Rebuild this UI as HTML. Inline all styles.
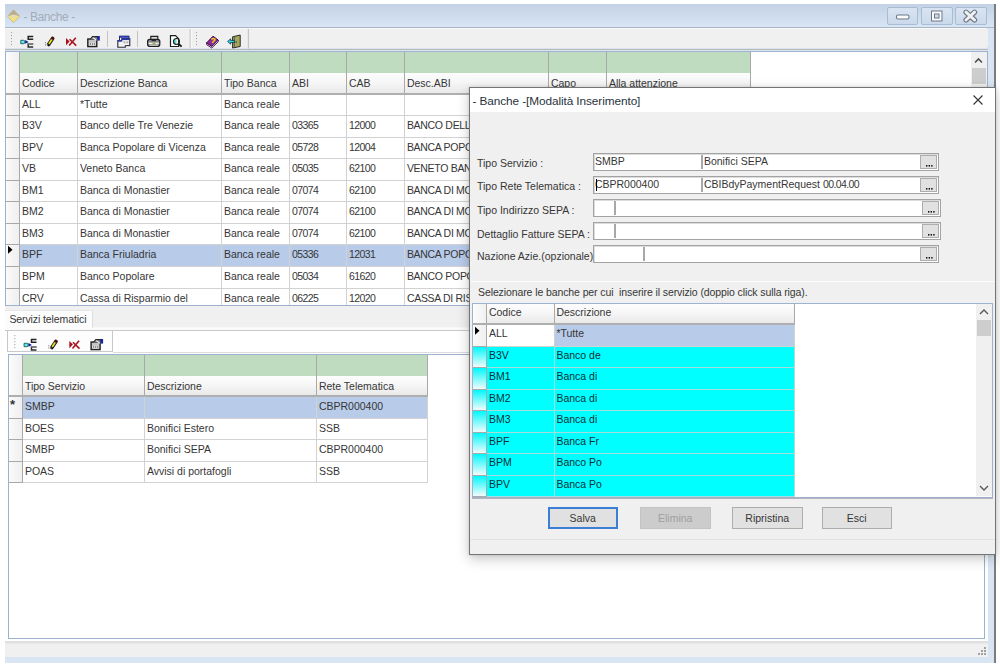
<!DOCTYPE html>
<html><head><meta charset="utf-8">
<style>
*{box-sizing:border-box;margin:0;padding:0}
html,body{width:1000px;height:667px;overflow:hidden;background:#fff;position:relative;font-family:"Liberation Sans",sans-serif;font-size:10.5px;line-height:10.5px;color:#363636}
.a{position:absolute}
.t{position:absolute;white-space:nowrap}
.n{letter-spacing:-0.55px}
</style></head><body>
<div class="a" style="left:5px;top:4px;width:991px;height:659px;background:#d9e5f3;border-right:2px solid #7c7c7c"></div>
<div class="a" style="left:5px;top:4px;width:989px;height:23px;background:linear-gradient(#c3d1e4,#d8e5f5)"></div>
<div class="a" style="left:5px;top:27px;width:989px;height:1px;background:#aab6c6"></div>
<svg class="a" style="left:7px;top:9px" width="14" height="15" viewBox="0 0 14 15">
<path d="M6.5 0.8 L12.8 7.2 L6.5 13.8 L0.5 7.2 Z" fill="#e6dcb4" stroke="#cfc08e" stroke-width="1"/>
<path d="M6.5 0.8 L12.8 7.2 L6.5 5.5 L0.5 7.2 Z" fill="#b8ad94"/>
<path d="M2.8 7.6 L6.5 11.4 L10.2 7.6" fill="none" stroke="#f4e070" stroke-width="1.8"/>
</svg>
<div class="t" style="left:23.40px;top:10.54px;font-size:12px;line-height:12px;color:#a3acb9;letter-spacing:-0.4px">- Banche -</div>
<div class="a" style="left:887px;top:7px;width:31px;height:18px;border:1px solid #a9bcd5;border-radius:2px;background:linear-gradient(#d9e4f2,#cbd9ec)"></div>
<div class="a" style="left:921px;top:7px;width:32px;height:18px;border:1px solid #a9bcd5;border-radius:2px;background:linear-gradient(#d9e4f2,#cbd9ec)"></div>
<div class="a" style="left:955px;top:7px;width:32px;height:18px;border:1px solid #a9bcd5;border-radius:2px;background:linear-gradient(#d9e4f2,#cbd9ec)"></div>
<svg class="a" style="left:887px;top:7px" width="100" height="18">
<rect x="9.5" y="8" width="12.5" height="4" rx="1.5" fill="#fbfcfd" stroke="#6e7886" stroke-width="1.1"/>
<rect x="44" y="3.5" width="11.5" height="11" fill="#6e7886"/>
<rect x="45" y="4.5" width="9.5" height="9" fill="#f8f9fb"/>
<rect x="47" y="6.5" width="5.5" height="5" fill="#6e7886"/>
<rect x="48" y="7.5" width="3.5" height="3" fill="#cfdbeb"/>
<path d="M79 5.2 L87.6 13 M87.6 5.2 L79 13" stroke="#6e7886" stroke-width="5.2" stroke-linecap="round"/>
<path d="M79 5.2 L87.6 13 M87.6 5.2 L79 13" stroke="#eef0f2" stroke-width="3" stroke-linecap="round"/>
</svg>
<div class="a" style="left:5px;top:28px;width:983px;height:20px;background:#f0f0f0;border-top:1px solid #f8f8f8;border-radius:0 3px 3px 0"></div>
<div class="a" style="left:5px;top:48.5px;width:983px;height:1px;background:#b9b7b2"></div>
<div class="a" style="left:5px;top:49.5px;width:983px;height:1.5px;background:#dde7f3"></div>
<svg class="a" style="left:0px;top:0px" width="260" height="52">
 <rect x="11" y="32" width="1" height="1.2" fill="#a4a4a4"/><rect x="11" y="35" width="1" height="1.2" fill="#a4a4a4"/><rect x="11" y="38" width="1" height="1.2" fill="#a4a4a4"/><rect x="11" y="41" width="1" height="1.2" fill="#a4a4a4"/><rect x="11" y="44" width="1" height="1.2" fill="#a4a4a4"/>
 <path d="M20.8 40.3 H23.4 Q25 40.3 25 42 Q25 43.7 23.4 43.7 H20.8 Z" fill="#6ae8e8" stroke="#1c6a6a" stroke-width="1"/>
 <path d="M25.2 40 L28.6 41.9 L25.2 43.8 Z" fill="#0c1c98"/>
 <path d="M33.2 36.6 H28.2 V39.2 H33.2" fill="none" stroke="#222" stroke-width="1.5"/>
 <path d="M33.2 44 H28.2 V46.9 H33.2" fill="none" stroke="#2a2a2a" stroke-width="1.5"/>
 <path d="M33.2 44 H28.2" fill="none" stroke="#888" stroke-width="1.5"/>
 <path d="M48.6 44.6 L52.6 38.4" stroke="#1a1a1a" stroke-width="3.6" stroke-linecap="round"/>
 <path d="M49.3 43.2 L51.8 39.6" stroke="#e8e020" stroke-width="1.8" stroke-linecap="round"/>
 <circle cx="52.6" cy="38.2" r="1.5" fill="#5a1010"/>
 <rect x="45" y="42" width="1" height="1.3" fill="#888"/><rect x="45" y="44.3" width="1" height="1.3" fill="#888"/><rect x="47" y="44.3" width="1" height="1.3" fill="#888"/>
 <path d="M66 38 L69.6 41.6 L66 45.2 Z" fill="#a8101c"/>
 <path d="M69.6 39.2 L76.2 45.6 M75.8 37.8 L69.2 45.6" stroke="#a8141e" stroke-width="1.6"/>
 <rect x="87.8" y="39" width="9" height="7.6" fill="#c4c4c4" stroke="#222" stroke-width="1.4"/>
 <rect x="89.2" y="42.8" width="6.2" height="2.6" fill="#f4f4f4"/>
 <rect x="89.8" y="43.4" width="1.2" height="1.2" fill="#444"/><rect x="91.8" y="43.4" width="1.2" height="1.2" fill="#444"/><rect x="93.8" y="43.4" width="1.2" height="1.2" fill="#444"/>
 <path d="M90 39.5 L92.5 36.6 H97.5 V39" fill="#8a8a8a" stroke="#2a2a2a" stroke-width="1.1"/>
 <path d="M92.8 37.6 L96.5 40.2" stroke="#f4f4f4" stroke-width="1.1"/>
 <rect x="97.4" y="36" width="2.4" height="4.6" fill="#1a24a8"/>

 <rect x="107" y="31" width="1" height="16" fill="#c2c2c2"/>
 <rect x="137" y="31" width="1" height="16" fill="#c2c2c2"/>
 <rect x="189.6" y="29" width="1.2" height="19.5" fill="#c6c6c6"/><rect x="190.8" y="29" width="1" height="19.5" fill="#fafafa"/>
 <rect x="119.5" y="36.3" width="9.5" height="7" fill="#eef2f8" stroke="#2a2a4a" stroke-width="1"/>
 <rect x="119.5" y="35.8" width="9.5" height="2" fill="#2838a8"/>
 <rect x="121.8" y="38.6" width="8" height="7" fill="#fafafa" stroke="#2a2a3a" stroke-width="1.1"/>
 <rect x="121.8" y="38.3" width="8" height="1.8" fill="#2838a8"/>
 <rect x="123.3" y="41.3" width="2.2" height="2.2" fill="#b0b0b0"/><rect x="126.3" y="41.3" width="2.2" height="2.2" fill="#b0b0b0"/>
 <path d="M121.8 40.6 H117.8 V47.2 H125.3 V45.6" fill="#f2f2f2" stroke="#2a2a3a" stroke-width="1.1"/>
 <rect x="117.8" y="40" width="4" height="1.6" fill="#2838a8"/>
 <path d="M150.8 39.8 V36.4 H157.8 V39.8" fill="#d4dcd4" stroke="#222" stroke-width="1.2"/>
 <rect x="147.6" y="39.4" width="12.2" height="7" rx="2.2" fill="#8c8c94" stroke="#1e1e1e" stroke-width="1.2"/>
 <rect x="151.5" y="39.8" width="4.5" height="1.4" fill="#2a2a34"/>
 <rect x="148.6" y="42.7" width="10.2" height="1.3" fill="#f2f2f2"/>
 <rect x="152.6" y="42.7" width="2.8" height="1.3" fill="#9ab030"/>
 <rect x="149.4" y="44.7" width="8.6" height="1" fill="#dadada"/>
 <path d="M170.5 35.6 H175.5 L178.6 38.8 V46.5 H170.5 Z" fill="#fff" stroke="#1e1e1e" stroke-width="1.2"/>
 <path d="M176.5 38.5 A3 3 0 0 0 176.5 44.5 Z" fill="#60e0d8"/>
 <circle cx="176.5" cy="41.5" r="3" fill="none" stroke="#1e1e1e" stroke-width="1.1"/>
 <path d="M178.6 43.8 L181.6 46.6" stroke="#111" stroke-width="1.8"/>
 <rect x="196" y="32" width="1" height="1.2" fill="#a4a4a4"/><rect x="196" y="35" width="1" height="1.2" fill="#a4a4a4"/><rect x="196" y="38" width="1" height="1.2" fill="#a4a4a4"/><rect x="196" y="41" width="1" height="1.2" fill="#a4a4a4"/><rect x="196" y="44" width="1" height="1.2" fill="#a4a4a4"/>
 <rect x="247.8" y="29" width="1.2" height="19.5" fill="#c6c6c6"/>
 <path d="M206.5 43 L213 36.2 L218.2 40 L211.8 46.4 Z" fill="#8e2a96" stroke="#3a0a48" stroke-width="1"/>
 <path d="M206.5 43 L206.8 44.8 L211.8 48 L218.2 41.8 L218.2 40 L211.8 46.4 Z" fill="#f2e6f2" stroke="#3a0a48" stroke-width="0.9"/>
 <path d="M211.4 39.4 Q213.6 37.6 215 39.2 Q215.3 40.6 213.4 41.4 L212.4 43" fill="none" stroke="#f0c820" stroke-width="1.5"/>
 <path d="M232.6 36.8 L240.2 35 V46.5 L232.6 48 Z" fill="#a8a85a" stroke="#2a2a2a" stroke-width="1"/>
 <path d="M234.4 36.6 V47.4" stroke="#555" stroke-width="0.9"/>
 <rect x="235.6" y="41.5" width="1.2" height="1.2" fill="#222"/>
 <path d="M227.6 41.5 L230.6 38.8 V40.4 H234.4 V42.6 H230.6 V44.2 Z" fill="#38d0e0" stroke="#0a3848" stroke-width="0.8"/>
</svg>
<div class="a" style="left:5px;top:51px;width:983px;height:255px;background:#fff;border:1px solid #9cb2ce"></div>
<div class="a" style="left:6px;top:52px;width:13px;height:42px;background:linear-gradient(90deg,#fcfcfc,#f0f0f0)"></div>
<div class="a" style="left:19px;top:52px;width:58px;height:21px;background:#c0dcc0"></div>
<div class="a" style="left:19px;top:73px;width:58px;height:21px;background:linear-gradient(#fdfdfd,#f6f6f6 45%,#e8e8e8)"></div>
<div class="a" style="left:77px;top:52px;width:144px;height:21px;background:#c0dcc0"></div>
<div class="a" style="left:77px;top:73px;width:144px;height:21px;background:linear-gradient(#fdfdfd,#f6f6f6 45%,#e8e8e8)"></div>
<div class="a" style="left:221px;top:52px;width:68px;height:21px;background:#c0dcc0"></div>
<div class="a" style="left:221px;top:73px;width:68px;height:21px;background:linear-gradient(#fdfdfd,#f6f6f6 45%,#e8e8e8)"></div>
<div class="a" style="left:289px;top:52px;width:57px;height:21px;background:#c0dcc0"></div>
<div class="a" style="left:289px;top:73px;width:57px;height:21px;background:linear-gradient(#fdfdfd,#f6f6f6 45%,#e8e8e8)"></div>
<div class="a" style="left:346px;top:52px;width:58px;height:21px;background:#c0dcc0"></div>
<div class="a" style="left:346px;top:73px;width:58px;height:21px;background:linear-gradient(#fdfdfd,#f6f6f6 45%,#e8e8e8)"></div>
<div class="a" style="left:404px;top:52px;width:144px;height:21px;background:#c0dcc0"></div>
<div class="a" style="left:404px;top:73px;width:144px;height:21px;background:linear-gradient(#fdfdfd,#f6f6f6 45%,#e8e8e8)"></div>
<div class="a" style="left:548px;top:52px;width:58px;height:21px;background:#c0dcc0"></div>
<div class="a" style="left:548px;top:73px;width:58px;height:21px;background:linear-gradient(#fdfdfd,#f6f6f6 45%,#e8e8e8)"></div>
<div class="a" style="left:606px;top:52px;width:144px;height:21px;background:#c0dcc0"></div>
<div class="a" style="left:606px;top:73px;width:144px;height:21px;background:linear-gradient(#fdfdfd,#f6f6f6 45%,#e8e8e8)"></div>
<div class="a" style="left:19px;top:52px;width:1px;height:42px;background:#a9a9a9"></div>
<div class="a" style="left:77px;top:52px;width:1px;height:42px;background:#a9a9a9"></div>
<div class="a" style="left:221px;top:52px;width:1px;height:42px;background:#a9a9a9"></div>
<div class="a" style="left:289px;top:52px;width:1px;height:42px;background:#a9a9a9"></div>
<div class="a" style="left:346px;top:52px;width:1px;height:42px;background:#a9a9a9"></div>
<div class="a" style="left:404px;top:52px;width:1px;height:42px;background:#a9a9a9"></div>
<div class="a" style="left:548px;top:52px;width:1px;height:42px;background:#a9a9a9"></div>
<div class="a" style="left:606px;top:52px;width:1px;height:42px;background:#a9a9a9"></div>
<div class="a" style="left:750px;top:52px;width:1px;height:42px;background:#a9a9a9"></div>
<div class="a" style="left:6px;top:93px;width:745px;height:2px;background:#afafaf"></div>
<div class="a" style="left:6px;top:95px;width:13px;height:20px;background:linear-gradient(90deg,#fafafa,#efefef)"></div>
<div class="a" style="left:20px;top:115px;width:731px;height:1px;background:#d2d2d2"></div>
<div class="a" style="left:6px;top:115px;width:13px;height:1px;background:#a9a9a9"></div>
<div class="a" style="left:6px;top:116px;width:13px;height:21px;background:linear-gradient(90deg,#fafafa,#efefef)"></div>
<div class="a" style="left:20px;top:137px;width:731px;height:1px;background:#d2d2d2"></div>
<div class="a" style="left:6px;top:137px;width:13px;height:1px;background:#a9a9a9"></div>
<div class="a" style="left:6px;top:138px;width:13px;height:20px;background:linear-gradient(90deg,#fafafa,#efefef)"></div>
<div class="a" style="left:20px;top:158px;width:731px;height:1px;background:#d2d2d2"></div>
<div class="a" style="left:6px;top:158px;width:13px;height:1px;background:#a9a9a9"></div>
<div class="a" style="left:6px;top:159px;width:13px;height:21px;background:linear-gradient(90deg,#fafafa,#efefef)"></div>
<div class="a" style="left:20px;top:180px;width:731px;height:1px;background:#d2d2d2"></div>
<div class="a" style="left:6px;top:180px;width:13px;height:1px;background:#a9a9a9"></div>
<div class="a" style="left:6px;top:181px;width:13px;height:20px;background:linear-gradient(90deg,#fafafa,#efefef)"></div>
<div class="a" style="left:20px;top:201px;width:731px;height:1px;background:#d2d2d2"></div>
<div class="a" style="left:6px;top:201px;width:13px;height:1px;background:#a9a9a9"></div>
<div class="a" style="left:6px;top:202px;width:13px;height:21px;background:linear-gradient(90deg,#fafafa,#efefef)"></div>
<div class="a" style="left:20px;top:223px;width:731px;height:1px;background:#d2d2d2"></div>
<div class="a" style="left:6px;top:223px;width:13px;height:1px;background:#a9a9a9"></div>
<div class="a" style="left:6px;top:224px;width:13px;height:20px;background:linear-gradient(90deg,#fafafa,#efefef)"></div>
<div class="a" style="left:20px;top:244px;width:731px;height:1px;background:#d2d2d2"></div>
<div class="a" style="left:6px;top:244px;width:13px;height:1px;background:#a9a9a9"></div>
<div class="a" style="left:6px;top:245px;width:13px;height:21px;background:linear-gradient(90deg,#fafafa,#efefef)"></div>
<div class="a" style="left:20px;top:245px;width:730px;height:21px;background:#b8cbe9"></div>
<div class="a" style="left:20px;top:266px;width:731px;height:1px;background:#d2d2d2"></div>
<div class="a" style="left:6px;top:266px;width:13px;height:1px;background:#a9a9a9"></div>
<div class="a" style="left:6px;top:267px;width:13px;height:21px;background:linear-gradient(90deg,#fafafa,#efefef)"></div>
<div class="a" style="left:20px;top:288px;width:731px;height:1px;background:#d2d2d2"></div>
<div class="a" style="left:6px;top:288px;width:13px;height:1px;background:#a9a9a9"></div>
<div class="a" style="left:6px;top:289px;width:13px;height:16px;background:linear-gradient(90deg,#fafafa,#efefef)"></div>
<div class="a" style="left:77px;top:95px;width:1px;height:210px;background:#d2d2d2"></div>
<div class="a" style="left:221px;top:95px;width:1px;height:210px;background:#d2d2d2"></div>
<div class="a" style="left:289px;top:95px;width:1px;height:210px;background:#d2d2d2"></div>
<div class="a" style="left:346px;top:95px;width:1px;height:210px;background:#d2d2d2"></div>
<div class="a" style="left:404px;top:95px;width:1px;height:210px;background:#d2d2d2"></div>
<div class="a" style="left:548px;top:95px;width:1px;height:210px;background:#d2d2d2"></div>
<div class="a" style="left:606px;top:95px;width:1px;height:210px;background:#d2d2d2"></div>
<div class="a" style="left:750px;top:95px;width:1px;height:210px;background:#d2d2d2"></div>
<div class="a" style="left:19px;top:95px;width:1px;height:210px;background:#a9a9a9"></div>
<div class="t" style="left:21.90px;top:77.91px">Codice</div>
<div class="t" style="left:79.90px;top:77.91px">Descrizione Banca</div>
<div class="t" style="left:223.90px;top:77.91px">Tipo Banca</div>
<div class="t" style="left:291.90px;top:77.91px">ABI</div>
<div class="t" style="left:348.90px;top:77.91px">CAB</div>
<div class="t" style="left:406.90px;top:77.91px">Desc.ABI</div>
<div class="t" style="left:550.90px;top:77.91px">Capo</div>
<div class="t" style="left:608.90px;top:77.91px">Alla attenzione</div>
<div class="t" style="left:21.90px;top:98.51px">ALL</div>
<div class="t" style="left:79.90px;top:98.51px">*Tutte</div>
<div class="t" style="left:223.90px;top:98.51px">Banca reale</div>
<div class="t" style="left:21.90px;top:119.51px">B3V</div>
<div class="t" style="left:79.90px;top:119.51px">Banco delle Tre Venezie</div>
<div class="t" style="left:223.90px;top:119.51px">Banca reale</div>
<div class="t" style="left:291.90px;top:119.51px"><span class="n">03365</span></div>
<div class="t" style="left:348.90px;top:119.51px"><span class="n">12000</span></div>
<div class="t" style="left:406.90px;top:119.51px;letter-spacing:-0.3px">BANCO DELL</div>
<div class="t" style="left:21.90px;top:141.51px">BPV</div>
<div class="t" style="left:79.90px;top:141.51px">Banca Popolare di Vicenza</div>
<div class="t" style="left:223.90px;top:141.51px">Banca reale</div>
<div class="t" style="left:291.90px;top:141.51px"><span class="n">05728</span></div>
<div class="t" style="left:348.90px;top:141.51px"><span class="n">12004</span></div>
<div class="t" style="left:406.90px;top:141.51px;letter-spacing:-0.3px">BANCA POPO</div>
<div class="t" style="left:21.90px;top:162.51px">VB</div>
<div class="t" style="left:79.90px;top:162.51px">Veneto Banca</div>
<div class="t" style="left:223.90px;top:162.51px">Banca reale</div>
<div class="t" style="left:291.90px;top:162.51px"><span class="n">05035</span></div>
<div class="t" style="left:348.90px;top:162.51px"><span class="n">62100</span></div>
<div class="t" style="left:406.90px;top:162.51px;letter-spacing:-0.3px">VENETO BAN</div>
<div class="t" style="left:21.90px;top:184.51px">BM1</div>
<div class="t" style="left:79.90px;top:184.51px">Banca di Monastier</div>
<div class="t" style="left:223.90px;top:184.51px">Banca reale</div>
<div class="t" style="left:291.90px;top:184.51px"><span class="n">07074</span></div>
<div class="t" style="left:348.90px;top:184.51px"><span class="n">62100</span></div>
<div class="t" style="left:406.90px;top:184.51px;letter-spacing:-0.3px">BANCA DI MO</div>
<div class="t" style="left:21.90px;top:205.51px">BM2</div>
<div class="t" style="left:79.90px;top:205.51px">Banca di Monastier</div>
<div class="t" style="left:223.90px;top:205.51px">Banca reale</div>
<div class="t" style="left:291.90px;top:205.51px"><span class="n">07074</span></div>
<div class="t" style="left:348.90px;top:205.51px"><span class="n">62100</span></div>
<div class="t" style="left:406.90px;top:205.51px;letter-spacing:-0.3px">BANCA DI MO</div>
<div class="t" style="left:21.90px;top:227.51px">BM3</div>
<div class="t" style="left:79.90px;top:227.51px">Banca di Monastier</div>
<div class="t" style="left:223.90px;top:227.51px">Banca reale</div>
<div class="t" style="left:291.90px;top:227.51px"><span class="n">07074</span></div>
<div class="t" style="left:348.90px;top:227.51px"><span class="n">62100</span></div>
<div class="t" style="left:406.90px;top:227.51px;letter-spacing:-0.3px">BANCA DI MO</div>
<div class="t" style="left:21.90px;top:248.51px">BPF</div>
<div class="t" style="left:79.90px;top:248.51px">Banca Friuladria</div>
<div class="t" style="left:223.90px;top:248.51px">Banca reale</div>
<div class="t" style="left:291.90px;top:248.51px"><span class="n">05336</span></div>
<div class="t" style="left:348.90px;top:248.51px"><span class="n">12031</span></div>
<div class="t" style="left:406.90px;top:248.51px;letter-spacing:-0.3px">BANCA POPO</div>
<div class="t" style="left:21.90px;top:270.51px">BPM</div>
<div class="t" style="left:79.90px;top:270.51px">Banco Popolare</div>
<div class="t" style="left:223.90px;top:270.51px">Banca reale</div>
<div class="t" style="left:291.90px;top:270.51px"><span class="n">05034</span></div>
<div class="t" style="left:348.90px;top:270.51px"><span class="n">61620</span></div>
<div class="t" style="left:406.90px;top:270.51px;letter-spacing:-0.3px">BANCO POPO</div>
<div class="t" style="left:21.90px;top:292.51px">CRV</div>
<div class="t" style="left:79.90px;top:292.51px">Cassa di Risparmio del</div>
<div class="t" style="left:223.90px;top:292.51px">Banca reale</div>
<div class="t" style="left:291.90px;top:292.51px"><span class="n">06225</span></div>
<div class="t" style="left:348.90px;top:292.51px"><span class="n">12020</span></div>
<div class="t" style="left:406.90px;top:292.51px;letter-spacing:-0.3px">CASSA DI RIS</div>
<svg class="a" style="left:7px;top:245px" width="8" height="10"><path d="M1 0.8 L5.5 4.8 L1 8.8Z" fill="#000"/></svg>
<div class="a" style="left:970.5px;top:52px;width:16px;height:253px;background:#f0f0f0"></div>
<svg class="a" style="left:970px;top:55px" width="17" height="12"><path d="M5 7.5 L8.5 4 L12 7.5" fill="none" stroke="#505050" stroke-width="1.6"/></svg>
<div class="a" style="left:971.5px;top:68px;width:14px;height:16px;background:#cdcdcd"></div>
<div class="a" style="left:5px;top:306px;width:983px;height:335px;background:#f0f0f0"></div>
<div class="a" style="left:5px;top:310px;width:87.5px;height:20px;background:#fcfcfc;border-top:1px solid #e6e6e6;border-right:1px solid #dedede"></div>
<div class="t" style="left:9.40px;top:314.11px;letter-spacing:-0.1px">Servizi telematici</div>
<div class="a" style="left:92.5px;top:327px;width:895.5px;height:1px;background:#f7f7f7"></div>
<div class="a" style="left:5px;top:328px;width:983px;height:2.5px;background:#fbfbfb"></div>
<div class="a" style="left:5px;top:330px;width:983px;height:1px;background:#c9c9c9"></div>
<div class="a" style="left:5px;top:331px;width:983px;height:310px;background:#fff"></div>
<div class="a" style="left:7px;top:331px;width:106px;height:21px;background:#fdfdfd;border:1px solid #c9c9c9;border-top:none"></div>
<div class="a" style="left:113px;top:352px;width:872px;height:1px;background:#dcdcdc"></div>
<svg class="a" style="left:0px;top:0px" width="120" height="360"><g transform="translate(3.3,303)">
 <rect x="11" y="32" width="1" height="1.2" fill="#a4a4a4"/><rect x="11" y="35" width="1" height="1.2" fill="#a4a4a4"/><rect x="11" y="38" width="1" height="1.2" fill="#a4a4a4"/><rect x="11" y="41" width="1" height="1.2" fill="#a4a4a4"/><rect x="11" y="44" width="1" height="1.2" fill="#a4a4a4"/>
 <path d="M20.8 40.3 H23.4 Q25 40.3 25 42 Q25 43.7 23.4 43.7 H20.8 Z" fill="#6ae8e8" stroke="#1c6a6a" stroke-width="1"/>
 <path d="M25.2 40 L28.6 41.9 L25.2 43.8 Z" fill="#0c1c98"/>
 <path d="M33.2 36.6 H28.2 V39.2 H33.2" fill="none" stroke="#222" stroke-width="1.5"/>
 <path d="M33.2 44 H28.2 V46.9 H33.2" fill="none" stroke="#2a2a2a" stroke-width="1.5"/>
 <path d="M33.2 44 H28.2" fill="none" stroke="#888" stroke-width="1.5"/>
 <path d="M48.6 44.6 L52.6 38.4" stroke="#1a1a1a" stroke-width="3.6" stroke-linecap="round"/>
 <path d="M49.3 43.2 L51.8 39.6" stroke="#e8e020" stroke-width="1.8" stroke-linecap="round"/>
 <circle cx="52.6" cy="38.2" r="1.5" fill="#5a1010"/>
 <rect x="45" y="42" width="1" height="1.3" fill="#888"/><rect x="45" y="44.3" width="1" height="1.3" fill="#888"/><rect x="47" y="44.3" width="1" height="1.3" fill="#888"/>
 <path d="M66 38 L69.6 41.6 L66 45.2 Z" fill="#a8101c"/>
 <path d="M69.6 39.2 L76.2 45.6 M75.8 37.8 L69.2 45.6" stroke="#a8141e" stroke-width="1.6"/>
 <rect x="87.8" y="39" width="9" height="7.6" fill="#c4c4c4" stroke="#222" stroke-width="1.4"/>
 <rect x="89.2" y="42.8" width="6.2" height="2.6" fill="#f4f4f4"/>
 <rect x="89.8" y="43.4" width="1.2" height="1.2" fill="#444"/><rect x="91.8" y="43.4" width="1.2" height="1.2" fill="#444"/><rect x="93.8" y="43.4" width="1.2" height="1.2" fill="#444"/>
 <path d="M90 39.5 L92.5 36.6 H97.5 V39" fill="#8a8a8a" stroke="#2a2a2a" stroke-width="1.1"/>
 <path d="M92.8 37.6 L96.5 40.2" stroke="#f4f4f4" stroke-width="1.1"/>
 <rect x="97.4" y="36" width="2.4" height="4.6" fill="#1a24a8"/>
</g></svg>
<div class="a" style="left:8px;top:354px;width:977px;height:285px;background:#fff;border:1px solid #9cb2ce"></div>
<div class="a" style="left:9px;top:355px;width:13px;height:41px;background:linear-gradient(90deg,#fcfcfc,#f0f0f0)"></div>
<div class="a" style="left:22px;top:355px;width:122px;height:21px;background:#c0dcc0"></div>
<div class="a" style="left:22px;top:376px;width:122px;height:20px;background:linear-gradient(#fdfdfd,#f6f6f6 45%,#e8e8e8)"></div>
<div class="a" style="left:144px;top:355px;width:172px;height:21px;background:#c0dcc0"></div>
<div class="a" style="left:144px;top:376px;width:172px;height:20px;background:linear-gradient(#fdfdfd,#f6f6f6 45%,#e8e8e8)"></div>
<div class="a" style="left:316px;top:355px;width:111px;height:21px;background:#c0dcc0"></div>
<div class="a" style="left:316px;top:376px;width:111px;height:20px;background:linear-gradient(#fdfdfd,#f6f6f6 45%,#e8e8e8)"></div>
<div class="a" style="left:22px;top:355px;width:1px;height:41px;background:#a9a9a9"></div>
<div class="a" style="left:144px;top:355px;width:1px;height:41px;background:#a9a9a9"></div>
<div class="a" style="left:316px;top:355px;width:1px;height:41px;background:#a9a9a9"></div>
<div class="a" style="left:427px;top:355px;width:1px;height:41px;background:#a9a9a9"></div>
<div class="a" style="left:9px;top:395px;width:419px;height:2px;background:#afafaf"></div>
<div class="a" style="left:9px;top:397px;width:13px;height:21px;background:linear-gradient(90deg,#fafafa,#efefef)"></div>
<div class="a" style="left:23px;top:397px;width:404px;height:21px;background:#b8cbe9"></div>
<div class="a" style="left:23px;top:418px;width:405px;height:1px;background:#d2d2d2"></div>
<div class="a" style="left:9px;top:418px;width:13px;height:1px;background:#a9a9a9"></div>
<div class="a" style="left:9px;top:419px;width:13px;height:20px;background:linear-gradient(90deg,#fafafa,#efefef)"></div>
<div class="a" style="left:23px;top:439px;width:405px;height:1px;background:#d2d2d2"></div>
<div class="a" style="left:9px;top:439px;width:13px;height:1px;background:#a9a9a9"></div>
<div class="a" style="left:9px;top:440px;width:13px;height:21px;background:linear-gradient(90deg,#fafafa,#efefef)"></div>
<div class="a" style="left:23px;top:461px;width:405px;height:1px;background:#d2d2d2"></div>
<div class="a" style="left:9px;top:461px;width:13px;height:1px;background:#a9a9a9"></div>
<div class="a" style="left:9px;top:462px;width:13px;height:20px;background:linear-gradient(90deg,#fafafa,#efefef)"></div>
<div class="a" style="left:23px;top:482px;width:405px;height:1px;background:#d2d2d2"></div>
<div class="a" style="left:9px;top:482px;width:13px;height:1px;background:#a9a9a9"></div>
<div class="a" style="left:144px;top:397px;width:1px;height:86px;background:#d2d2d2"></div>
<div class="a" style="left:316px;top:397px;width:1px;height:86px;background:#d2d2d2"></div>
<div class="a" style="left:427px;top:397px;width:1px;height:86px;background:#d2d2d2"></div>
<div class="a" style="left:22px;top:397px;width:1px;height:86px;background:#a9a9a9"></div>
<div class="t" style="left:24.90px;top:380.61px">Tipo Servizio</div>
<div class="t" style="left:146.90px;top:380.61px">Descrizione</div>
<div class="t" style="left:318.90px;top:380.61px">Rete Telematica</div>
<div class="t" style="left:24.90px;top:400.91px">SMBP</div>
<div class="t" style="left:146.90px;top:400.91px"></div>
<div class="t" style="left:318.90px;top:400.91px">CBPR000400</div>
<div class="t" style="left:24.90px;top:422.91px">BOES</div>
<div class="t" style="left:146.90px;top:422.91px">Bonifici Estero</div>
<div class="t" style="left:318.90px;top:422.91px">SSB</div>
<div class="t" style="left:24.90px;top:443.91px">SMBP</div>
<div class="t" style="left:146.90px;top:443.91px">Bonifici SEPA</div>
<div class="t" style="left:318.90px;top:443.91px">CBPR000400</div>
<div class="t" style="left:24.90px;top:465.91px">POAS</div>
<div class="t" style="left:146.90px;top:465.91px">Avvisi di portafogli</div>
<div class="t" style="left:318.90px;top:465.91px">SSB</div>
<div class="t" style="left:9.90px;top:399.61px;font-size:13px;font-weight:bold">*</div>
<div class="a" style="left:5px;top:641px;width:983px;height:16px;background:linear-gradient(#dedede,#e2e2e2 2px,#f0f0f0 3px)"></div>
<svg class="a" style="left:976px;top:645px" width="12" height="12"><g fill="#a0a0a0"><rect x="8" y="2" width="2" height="2"/><rect x="5" y="5" width="2" height="2"/><rect x="8" y="5" width="2" height="2"/><rect x="2" y="8" width="2" height="2"/><rect x="5" y="8" width="2" height="2"/><rect x="8" y="8" width="2" height="2"/></g></svg>
<div class="a" style="left:469px;top:87px;width:527px;height:468px;background:#f0f0f0;border:1px solid #747474;box-shadow:0 4px 12px rgba(0,0,0,.22),0 0 3px rgba(0,0,0,.12)"></div>
<div class="a" style="left:470px;top:88px;width:525px;height:24px;background:#fff"></div>
<div class="t" style="left:472.40px;top:95.51px;font-size:11.8px;line-height:11.8px;color:#28323c;letter-spacing:-0.08px">- Banche -[Modalità Inserimento]</div>
<svg class="a" style="left:972px;top:94px" width="12" height="12"><path d="M1.5 1.5 L10.5 10.5 M10.5 1.5 L1.5 10.5" stroke="#333" stroke-width="1.1"/></svg>
<div class="t" style="left:477.00px;top:157.91px">Tipo Servizio :</div>
<div class="t" style="left:477.00px;top:180.91px">Tipo Rete Telematica :</div>
<div class="t" style="left:477.00px;top:204.51px">Tipo Indirizzo SEPA :</div>
<div class="t" style="left:477.00px;top:228.51px">Dettaglio Fatture SEPA :</div>
<div class="t" style="left:477.00px;top:251.11px">Nazione Azie.(opzionale)</div>
<div class="a" style="left:593px;top:153px;width:346px;height:18px;background:#fff;border:1px solid #a3a3a3;box-shadow:inset 1px 1px 0 #dcdcdc"></div>
<div class="a" style="left:701px;top:155px;width:2px;height:14px;background:#a8a8a8"></div>
<div class="a" style="left:920.2px;top:155.2px;width:16.6px;height:13.6px;background:#e1e1e1;border:1px solid #adadad"></div>
<svg class="a" style="left:925.8px;top:165.2px" width="8" height="3"><rect x="0" y="0" width="1.4" height="1.6" fill="#111"/><rect x="2.6" y="0" width="1.4" height="1.6" fill="#111"/><rect x="5.2" y="0" width="1.4" height="1.6" fill="#111"/></svg>
<div class="t" style="left:594.90px;top:156.01px">SMBP</div>
<div class="t" style="left:703.90px;top:156.01px">Bonifici SEPA</div>
<div class="a" style="left:593px;top:176px;width:346px;height:18px;background:#fff;border:1px solid #a3a3a3;box-shadow:inset 1px 1px 0 #dcdcdc"></div>
<div class="a" style="left:701px;top:178px;width:2px;height:14px;background:#a8a8a8"></div>
<div class="a" style="left:920.2px;top:178.2px;width:16.6px;height:13.6px;background:#e1e1e1;border:1px solid #adadad"></div>
<svg class="a" style="left:925.8px;top:188.2px" width="8" height="3"><rect x="0" y="0" width="1.4" height="1.6" fill="#111"/><rect x="2.6" y="0" width="1.4" height="1.6" fill="#111"/><rect x="5.2" y="0" width="1.4" height="1.6" fill="#111"/></svg>
<div class="t" style="left:594.90px;top:179.01px">CBPR000400</div>
<div class="t" style="left:703.90px;top:179.01px">CBIBdyPaymentRequest <span style="letter-spacing:-0.6px">00.04.00</span></div>
<div class="a" style="left:593px;top:199px;width:348px;height:18px;background:#fff;border:1px solid #a3a3a3;box-shadow:inset 1px 1px 0 #dcdcdc"></div>
<div class="a" style="left:614px;top:201px;width:2px;height:14px;background:#a8a8a8"></div>
<div class="a" style="left:922.2px;top:201.2px;width:16.6px;height:13.6px;background:#e1e1e1;border:1px solid #adadad"></div>
<svg class="a" style="left:927.8px;top:211.2px" width="8" height="3"><rect x="0" y="0" width="1.4" height="1.6" fill="#111"/><rect x="2.6" y="0" width="1.4" height="1.6" fill="#111"/><rect x="5.2" y="0" width="1.4" height="1.6" fill="#111"/></svg>
<div class="a" style="left:593px;top:222px;width:348px;height:18px;background:#fff;border:1px solid #a3a3a3;box-shadow:inset 1px 1px 0 #dcdcdc"></div>
<div class="a" style="left:614px;top:224px;width:2px;height:14px;background:#a8a8a8"></div>
<div class="a" style="left:922.2px;top:224.2px;width:16.6px;height:13.6px;background:#e1e1e1;border:1px solid #adadad"></div>
<svg class="a" style="left:927.8px;top:234.2px" width="8" height="3"><rect x="0" y="0" width="1.4" height="1.6" fill="#111"/><rect x="2.6" y="0" width="1.4" height="1.6" fill="#111"/><rect x="5.2" y="0" width="1.4" height="1.6" fill="#111"/></svg>
<div class="a" style="left:593px;top:245px;width:346px;height:18px;background:#fff;border:1px solid #a3a3a3;box-shadow:inset 1px 1px 0 #dcdcdc"></div>
<div class="a" style="left:643px;top:247px;width:2px;height:14px;background:#a8a8a8"></div>
<div class="a" style="left:920.2px;top:247.2px;width:16.6px;height:13.6px;background:#e1e1e1;border:1px solid #adadad"></div>
<svg class="a" style="left:925.8px;top:257.2px" width="8" height="3"><rect x="0" y="0" width="1.4" height="1.6" fill="#111"/><rect x="2.6" y="0" width="1.4" height="1.6" fill="#111"/><rect x="5.2" y="0" width="1.4" height="1.6" fill="#111"/></svg>
<div class="a" style="left:596px;top:179px;width:1px;height:12px;background:#000"></div>
<div class="a" style="left:470px;top:281px;width:525px;height:1px;background:#fbfbfb"></div>
<div class="t" style="left:478.00px;top:287.11px;white-space:pre;letter-spacing:-0.1px">Selezionare le banche per cui  inserire il servizio (doppio click sulla riga).</div>
<div class="a" style="left:472px;top:303px;width:521px;height:194.5px;background:#fff;border:1px solid #9cb2ce"></div>
<div class="a" style="left:473px;top:304px;width:13px;height:20px;background:linear-gradient(90deg,#fcfcfc,#f0f0f0)"></div>
<div class="a" style="left:486px;top:304px;width:68px;height:20px;background:linear-gradient(#fdfdfd,#f6f6f6 45%,#e8e8e8)"></div>
<div class="a" style="left:554px;top:304px;width:240px;height:20px;background:linear-gradient(#fdfdfd,#f6f6f6 45%,#e8e8e8)"></div>
<div class="a" style="left:486px;top:304px;width:1px;height:20px;background:#a9a9a9"></div>
<div class="a" style="left:554px;top:304px;width:1px;height:20px;background:#a9a9a9"></div>
<div class="a" style="left:794px;top:304px;width:1px;height:20px;background:#a9a9a9"></div>
<div class="a" style="left:473px;top:323px;width:322px;height:2px;background:#afafaf"></div>
<div class="a" style="left:473px;top:325px;width:13px;height:21px;background:linear-gradient(90deg,#fafafa,#efefef)"></div>
<div class="a" style="left:487px;top:325px;width:67px;height:21px;background:#fff"></div>
<div class="a" style="left:555px;top:325px;width:239px;height:21px;background:#b8cbe9"></div>
<div class="a" style="left:487px;top:346px;width:308px;height:1px;background:#d2d2d2"></div>
<div class="a" style="left:473px;top:346px;width:13px;height:1px;background:#a9a9a9"></div>
<div class="a" style="left:473px;top:347px;width:13px;height:20px;background:linear-gradient(#00f8fc,#f2fbfb)"></div>
<div class="a" style="left:487px;top:347px;width:307px;height:20px;background:#00ffff"></div>
<div class="a" style="left:487px;top:367px;width:308px;height:1px;background:#a6dcdc"></div>
<div class="a" style="left:473px;top:367px;width:13px;height:1px;background:#a9a9a9"></div>
<div class="a" style="left:473px;top:368px;width:13px;height:21px;background:linear-gradient(#00f8fc,#f2fbfb)"></div>
<div class="a" style="left:487px;top:368px;width:307px;height:21px;background:#00ffff"></div>
<div class="a" style="left:487px;top:389px;width:308px;height:1px;background:#a6dcdc"></div>
<div class="a" style="left:473px;top:389px;width:13px;height:1px;background:#a9a9a9"></div>
<div class="a" style="left:473px;top:390px;width:13px;height:20px;background:linear-gradient(#00f8fc,#f2fbfb)"></div>
<div class="a" style="left:487px;top:390px;width:307px;height:20px;background:#00ffff"></div>
<div class="a" style="left:487px;top:410px;width:308px;height:1px;background:#a6dcdc"></div>
<div class="a" style="left:473px;top:410px;width:13px;height:1px;background:#a9a9a9"></div>
<div class="a" style="left:473px;top:411px;width:13px;height:21px;background:linear-gradient(#00f8fc,#f2fbfb)"></div>
<div class="a" style="left:487px;top:411px;width:307px;height:21px;background:#00ffff"></div>
<div class="a" style="left:487px;top:432px;width:308px;height:1px;background:#a6dcdc"></div>
<div class="a" style="left:473px;top:432px;width:13px;height:1px;background:#a9a9a9"></div>
<div class="a" style="left:473px;top:433px;width:13px;height:20px;background:linear-gradient(#00f8fc,#f2fbfb)"></div>
<div class="a" style="left:487px;top:433px;width:307px;height:20px;background:#00ffff"></div>
<div class="a" style="left:487px;top:453px;width:308px;height:1px;background:#a6dcdc"></div>
<div class="a" style="left:473px;top:453px;width:13px;height:1px;background:#a9a9a9"></div>
<div class="a" style="left:473px;top:454px;width:13px;height:21px;background:linear-gradient(#00f8fc,#f2fbfb)"></div>
<div class="a" style="left:487px;top:454px;width:307px;height:21px;background:#00ffff"></div>
<div class="a" style="left:487px;top:475px;width:308px;height:1px;background:#a6dcdc"></div>
<div class="a" style="left:473px;top:475px;width:13px;height:1px;background:#a9a9a9"></div>
<div class="a" style="left:473px;top:476px;width:13px;height:20px;background:linear-gradient(#00f8fc,#f2fbfb)"></div>
<div class="a" style="left:487px;top:476px;width:307px;height:20px;background:#00ffff"></div>
<div class="a" style="left:487px;top:496px;width:308px;height:1px;background:#a6dcdc"></div>
<div class="a" style="left:473px;top:496px;width:13px;height:1px;background:#a9a9a9"></div>
<div class="a" style="left:554px;top:325px;width:1px;height:172px;background:#d2d2d2"></div>
<div class="a" style="left:794px;top:325px;width:1px;height:172px;background:#d2d2d2"></div>
<div class="a" style="left:486px;top:325px;width:1px;height:172px;background:#a9a9a9"></div>
<div class="a" style="left:472px;top:497.5px;width:521px;height:1px;background:#b4b4bc"></div>
<div class="a" style="left:554px;top:346px;width:1px;height:150px;background:#a6dcdc"></div>
<div class="a" style="left:794px;top:346px;width:1px;height:150px;background:#a6dcdc"></div>
<div class="t" style="left:488.90px;top:307.31px">Codice</div>
<div class="t" style="left:556.40px;top:307.31px">Descrizione</div>
<div class="t" style="left:488.90px;top:328.31px">ALL</div>
<div class="t" style="left:556.40px;top:328.31px">*Tutte</div>
<div class="t" style="left:488.90px;top:350.31px;color:#0c3038">B3V</div>
<div class="t" style="left:556.40px;top:350.31px;color:#0c3038">Banco de</div>
<div class="t" style="left:488.90px;top:371.31px;color:#0c3038">BM1</div>
<div class="t" style="left:556.40px;top:371.31px;color:#0c3038">Banca di</div>
<div class="t" style="left:488.90px;top:393.31px;color:#0c3038">BM2</div>
<div class="t" style="left:556.40px;top:393.31px;color:#0c3038">Banca di</div>
<div class="t" style="left:488.90px;top:414.31px;color:#0c3038">BM3</div>
<div class="t" style="left:556.40px;top:414.31px;color:#0c3038">Banca di</div>
<div class="t" style="left:488.90px;top:436.31px;color:#0c3038">BPF</div>
<div class="t" style="left:556.40px;top:436.31px;color:#0c3038">Banca Fr</div>
<div class="t" style="left:488.90px;top:457.31px;color:#0c3038">BPM</div>
<div class="t" style="left:556.40px;top:457.31px;color:#0c3038">Banco Po</div>
<div class="t" style="left:488.90px;top:479.31px;color:#0c3038">BPV</div>
<div class="t" style="left:556.40px;top:479.31px;color:#0c3038">Banca Po</div>
<svg class="a" style="left:474px;top:326px" width="8" height="10"><path d="M1 0.8 L5.5 4.8 L1 8.8Z" fill="#000"/></svg>
<div class="a" style="left:976px;top:304px;width:16px;height:192px;background:#f0f0f0"></div>
<svg class="a" style="left:976px;top:306px" width="16" height="12"><path d="M4 8 L8 4 L12 8" fill="none" stroke="#555" stroke-width="1.3"/></svg>
<svg class="a" style="left:976px;top:482px" width="16" height="12"><path d="M4 4 L8 8 L12 4" fill="none" stroke="#555" stroke-width="1.3"/></svg>
<div class="a" style="left:977px;top:320px;width:14px;height:16px;background:#cdcdcd"></div>
<div class="a" style="left:547.5px;top:507px;width:70.5px;height:22px;background:#e1e1e1;border:2px solid #3a7ed6"></div>
<div class="t" style="left:547.5px;top:513px;width:70.5px;text-align:center">Salva</div>
<div class="a" style="left:640px;top:507px;width:70.5px;height:22px;background:#cccccc;border:1px solid #c4c4c4"></div>
<div class="t" style="left:640px;top:513px;width:70.5px;text-align:center;color:#a0a0a0">Elimina</div>
<div class="a" style="left:732px;top:507px;width:70.5px;height:22px;background:#e1e1e1;border:1px solid #adadad"></div>
<div class="t" style="left:732px;top:513px;width:70.5px;text-align:center">Ripristina</div>
<div class="a" style="left:821.5px;top:507px;width:70.5px;height:22px;background:#e1e1e1;border:1px solid #adadad"></div>
<div class="t" style="left:821.5px;top:513px;width:70.5px;text-align:center">Esci</div>
<div class="a" style="left:470px;top:539px;width:525px;height:1px;background:#e3e3e3"></div>
</body></html>
